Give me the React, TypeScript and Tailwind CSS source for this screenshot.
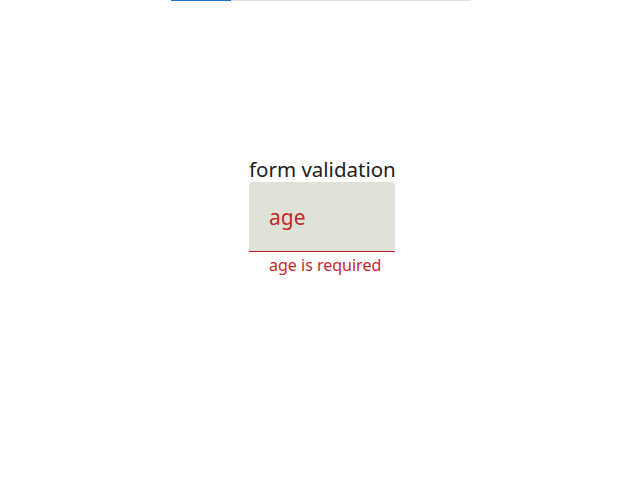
export default function App() {
  return (
    <div className="relative w-[641px] h-[480px] bg-white font-['Noto_Sans',sans-serif]">
      {/* top progress bar */}
      <div className="absolute left-[171px] top-0 w-[300px] h-px bg-[#e0e0e0]">
        <div className="h-px w-[60px] bg-[#1976d2]" />
      </div>

      <div className="flex flex-col items-center pt-[156px] pl-[3px]">
        <div className="flex flex-col w-[146px]">
          <h1 className="text-[20.5px] leading-[26px] text-[#212121] text-center whitespace-nowrap">form validation</h1>
          <div className="h-[70px] bg-[#dfe2d6] rounded-t-[4px] border-b border-[#b71c1c] flex items-center px-[20px]">
            <span className="text-[21px] leading-none text-[#c62828] pt-[1px]">age</span>
          </div>
          <div className="px-[20px] pt-[3px] text-[16px] leading-[20px] text-[#c62828] whitespace-nowrap">age is required</div>
        </div>
      </div>
    </div>
  )
}
